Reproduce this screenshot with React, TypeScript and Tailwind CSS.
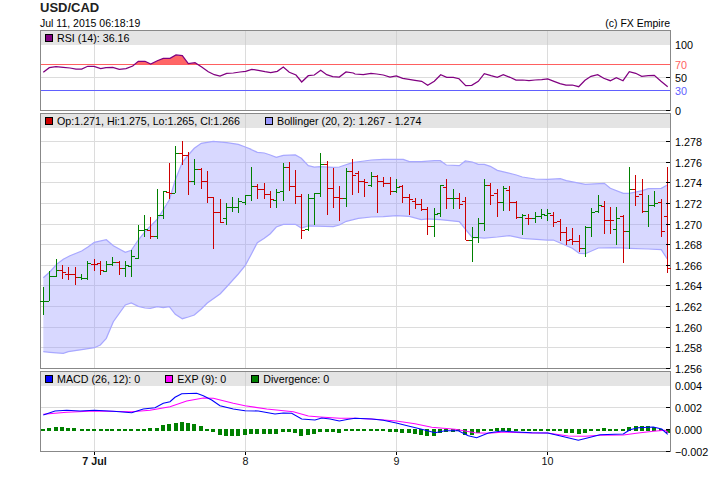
import type { ReactNode } from "react";

type Pt = [number, number];
// bar readings: x, high, low, open, close (3x crop coordinates)
type Bar = [number, number, number, number, number];

const VGRID = [94, 245, 396, 547];

const pts = (list: Pt[], ox: number, oy: number): Pt[] =>
  list.map(([x, y]) => [ox + x / 3, oy + y / 3]);
const line = (list: Pt[]) => list.map(([x, y]) => `${x.toFixed(1)},${y.toFixed(1)}`).join(" ");

const rsi: Pt[] = [
  ...pts([[130,217],[148,203],[168,200],[190,202],[210,204],[228,207],[245,207],[263,199],[282,199],[302,206],[318,203],[338,202],[358,208],[378,206],[398,198],[415,184],[435,184],[452,192],[472,182],[490,175],[510,175],[528,165],[547,167],[565,191],[585,188],[605,201],[625,215],[643,224],[660,228],[680,220],[700,219],[720,216],[737,214],[755,208],[775,211],[795,215],[812,218],[832,214],[850,201],[868,217],[888,225],[905,246],[925,227],[943,225],[962,211],[980,224],[998,230],[1018,231],[1038,216],[1060,219]], 0, 0),
  ...pts([[0,222],[25,224],[48,220],[65,222],[85,225],[105,231],[124,228],[143,235],[162,238],[180,241],[200,244],[218,256],[238,244],[257,224],[275,232],[295,232],[312,236],[332,257],[350,256],[370,244],[388,221],[408,227],[427,232],[445,224],[465,232],[483,240],[503,240],[522,242],[540,240],[560,239],[578,237],[597,244],[615,251],[633,255],[652,255],[671,260],[690,241],[708,229],[728,224],[746,235],[766,242],[784,233],[804,242],[823,215],[842,220],[860,229],[880,227],[898,226],[918,244],[938,260]], 355, 0),
];

const upper: Pt[] = [
  ...pts([[40,458],[60,440],[80,418],[100,403],[120,392],[155,378],[175,365],[193,352],[229,344],[250,362],[286,382],[304,376],[325,345],[345,320],[382,283],[418,225],[436,165],[457,112],[475,90],[493,70],[514,55],[550,49],[590,53],[625,58],[646,66],[664,73]], 30, 125),
  ...pts([[0,72],[22,82],[43,84],[61,90],[79,97],[100,91],[136,90],[154,100],[175,122],[193,126],[211,125],[250,127],[268,126],[307,113],[343,108],[364,105],[400,103],[439,103],[460,103],[478,110],[514,110],[553,107],[571,107],[589,120],[628,122],[646,108],[667,111]], 250, 125),
  ...pts([[-5,118],[13,118],[31,124],[52,136],[109,150],[127,156],[166,162],[202,163],[241,161],[259,167],[316,178],[373,175],[391,190],[430,205],[448,205],[487,197],[505,191],[544,190],[562,180]], 480, 125),
];

const lower: Pt[] = [
  ...pts([[40,680],[60,682],[100,685],[115,680],[155,674],[193,668],[211,660],[229,640],[250,590],[286,540],[304,534],[325,544],[345,549],[361,550],[382,545],[400,548],[418,545],[436,568],[457,581],[475,576],[493,570],[514,552],[532,534],[571,506],[589,487],[625,447],[646,421],[664,388]], 30, 125),
  ...pts([[22,353],[43,340],[61,326],[79,306],[100,298],[136,298],[154,309],[175,303],[250,305],[268,300],[289,289],[325,280],[364,276],[400,275],[439,272],[478,274],[514,284],[532,282],[571,284],[628,290],[646,312],[667,338]], 250, 125),
  ...pts([[-5,338],[13,339],[52,336],[88,332],[127,340],[202,345],[220,345],[277,370],[298,385],[316,386],[355,369],[409,368],[448,370],[505,372],[544,374],[562,402]], 480, 125),
];

const macd: Pt[] = [
  ...pts([[130,150],[165,138],[200,136],[240,138],[283,136],[340,139],[395,143],[430,132],[465,128],[490,115],[510,110],[525,97],[545,86],[590,85],[610,92],[635,105],[660,122],[700,132],[735,137],[775,138],[825,147],[850,144],[875,145],[905,162],[945,165],[965,159],[990,162],[1018,168],[1045,163]], 0, 365),
  ...pts([[0,160],[50,162],[85,166],[124,174],[160,183],[200,193],[240,203],[270,197],[310,197],[340,212],[365,218],[400,204],[440,198],[470,200],[530,203],[578,204],[620,214],[670,226],[700,218],[735,209],[780,208],[805,207],[825,194],[850,188],[895,186],[920,192],[938,208]], 355, 365),
];

const signal: Pt[] = [
  ...pts([[130,148],[200,142],[283,138],[395,140],[450,136],[510,125],[560,108],[610,99],[640,100],[700,115],[735,122],[800,132],[880,140],[925,153],[960,156],[1020,160]], 0, 365),
  ...pts([[0,160],[60,163],[124,168],[180,176],[230,187],[300,193],[360,203],[400,205],[450,201],[530,204],[578,204],[640,213],[690,214],[735,211],[805,210],[850,204],[895,199],[930,196],[940,203]], 355, 365),
];

const bars: [number, Bar[]][] = [
  [30, [[40,488,572,528,528],[58,440,530,528,455],[79,402,456,455,436],[97,420,462,436,442],[115,426,466,448,448],[136,428,482,448,457],[154,448,467,457,459],[172,408,467,461,415],[193,402,438,418,418],[211,408,450,414,436],[229,408,443,438,418],[247,396,425,418,411],[268,410,450,411,429],[286,408,456,429,421],[304,376,456,424,394],[325,302,404,401,316],[343,270,338,316,314],[361,276,344,316,334],[382,192,344,334,271],[400,200,282,271,200],[418,114,222,202,204],[436,64,206,204,86],[457,48,122,86,90],[475,82,210,90,170],[493,102,180,170,132],[514,130,192,132,170],[532,140,234,170,216],[550,216,374,216,262],[571,222,294,262,291],[589,236,300,281,246],[607,218,262,246,246],[625,220,264,246,230],[646,210,242,232,212],[664,128,230,212,184]]],
  [250, [[22,178,222,184,194],[43,174,222,194,208],[61,198,250,208,224],[79,192,250,226,202],[100,114,228,198,128],[118,112,200,128,184],[136,136,238,184,214],[154,208,344,214,316],[175,208,320,314,220],[193,204,302,220,204],[211,84,216,204,118],[232,108,270,118,190],[250,130,250,190,216],[268,184,288,216,220],[289,130,248,220,138],[307,102,212,138,152],[325,140,204,146,170],[343,162,216,170,172],[364,142,186,182,154],[382,150,266,154,170],[400,156,186,170,176],[421,156,210,176,200],[439,162,206,200,186],[457,180,234,184,216],[478,208,272,216,224],[496,220,254,230,238],[514,222,260,238,254],[532,246,332,254,304],[553,250,338,304,268],[571,180,278,266,182],[589,162,252,188,220],[610,192,252,220,220],[628,204,252,220,238],[646,218,346,230,346],[667,306,412,346,338],[685,280,356,338,296]]],
  [480, [[13,162,320,296,182],[31,174,240,182,212],[52,192,278,206,232],[70,184,258,232,190],[88,184,258,196,232],[109,228,282,232,278],[127,268,330,276,272],[145,268,300,281,281],[166,262,296,281,274],[184,252,282,274,268],[202,252,290,270,266],[220,262,306,272,292],[241,282,348,290,322],[259,308,362,322,346],[277,310,362,342,350],[298,332,382,350,370],[316,304,396,370,306],[334,250,336,306,262],[355,212,264,258,240],[373,228,328,244,286],[391,246,328,286,286],[409,248,362,314,280],[430,270,414,274,318],[448,128,372,318,192],[466,150,244,192,214],[487,162,266,208,258],[505,210,308,258,240],[523,198,248,240,234],[544,222,338,232,318],[562,128,444,274,430]]],
];

// bars read as red in the picture
const RED = new Set([
  "30:97","30:115","30:136","30:193","30:211","30:268","30:361","30:418","30:457","30:475","30:514","30:532","30:550","30:571",
  "250:22","250:43","250:61","250:118","250:136","250:154","250:232","250:250","250:268","250:307","250:325","250:343","250:382","250:400","250:421","250:457","250:478","250:496","250:514","250:532","250:589","250:628","250:646",
  "480:31","480:52","480:88","480:109","480:145","480:220","480:241","480:259","480:277","480:298","480:373","480:391","480:430","480:466","480:487","480:544","480:562",
]);

const histA: Pt[] = [[128,3],[147,5],[168,8],[185,8],[204,6],[223,5],[245,3],[263,3],[283,3],[303,2],[320,1],[337,1],[357,-2],[375,-3],[393,-3],[413,2],[433,4],[451,5],[471,7],[490,14],[508,17],[527,22],[546,25],[564,20],[583,18],[603,11],[621,3],[640,-6],[660,-15],[678,-18],[697,-18],[714,-18],[735,-15],[752,-13],[771,-13],[792,-12],[810,-12],[828,-12],[848,-6],[867,-6],[886,-10],[903,-18],[924,-14],[941,-12],[960,-6],[980,-6],[998,-6],[1017,-9],[1037,-4],[1055,-3]];
const histB: Pt[] = [[8,-3],[28,-3],[47,-3],[65,-3],[85,-3],[104,-5],[123,-5],[141,-9],[162,-10],[180,-12],[198,-14],[216,-18],[237,-18],[255,-8],[273,-6],[293,-6],[310,-4],[330,-14],[350,-14],[368,-10],[388,-2],[407,1],[425,5],[445,7],[463,7],[483,2],[503,1],[522,1],[540,-1],[558,-2],[578,-2],[597,-2],[615,-3],[633,-8],[652,-8],[671,-12],[690,-8],[708,2],[728,3],[746,6],[766,3],[784,3],[804,3],[823,10],[842,13],[860,13],[880,13],[898,9],[918,3],[938,-8]];

function Legend({ color, label }: { color: string; label: string }) {
  return (
    <div className="flex items-center gap-[4px]">
      <span className={`w-[8px] h-[8px] border border-black ${color}`} />
      <span>{label}</span>
    </div>
  );
}

function Panel({ h, legend, children }: { h: string; legend: ReactNode; children: ReactNode }) {
  return (
    <div className={`w-[631px] border border-[#888888] flex flex-col ${h}`}>
      <div className="relative h-[14px] bg-[#e4e4e4] flex items-center pl-[4px] shrink-0 leading-[14px]">
        <svg className="absolute left-0 top-0" width="629" height="14" viewBox="41 0 629 14" shapeRendering="crispEdges">
          {VGRID.map((x) => (
            <rect key={x} x={x} y={0} width={1} height={14} fill="#d2d2d2" />
          ))}
        </svg>
        <div className="relative flex items-center gap-[25px]">{legend}</div>
      </div>
      {children}
    </div>
  );
}

function Grid({ rows, top, bottom }: { rows: number[]; top: number; bottom: number }) {
  return (
    <g shapeRendering="crispEdges">
      {rows.map((y) => (
        <rect key={y} x={41} y={y} width={629} height={1} fill="#dcdcdc" />
      ))}
      {VGRID.map((x) => (
        <rect key={x} x={x} y={top} width={1} height={bottom - top} fill="#dcdcdc" />
      ))}
    </g>
  );
}

function Ticks({ rows }: { rows: number[] }) {
  return (
    <g shapeRendering="crispEdges">
      {rows.map((y) => (
        <rect key={y} x={666} y={y} width={4} height={1} fill="#000000" />
      ))}
    </g>
  );
}

function Axis({ vb, h, labels }: { vb: string; h: number; labels: [string, number, string?][] }) {
  return (
    <svg className="overflow-visible shrink-0" width="39" height={h} viewBox={vb}>
      {labels.map(([t, y, c]) => (
        <text key={t} x={675} y={y + 4.5} fontSize="10.8" fill={c ?? "#000000"}>
          {t}
        </text>
      ))}
    </svg>
  );
}

export default function App() {
  const mainRows = [141, 162, 182, 203, 224, 244, 265, 285, 306, 327, 347];
  const mainLabels = ["1.278", "1.276", "1.274", "1.272", "1.270", "1.268", "1.266", "1.264", "1.262", "1.260", "1.258"];

  return (
    <div className="w-[710px] h-[487px] bg-white pl-[40px] overflow-hidden text-[10.7px] text-black font-['Liberation_Sans',Arial,sans-serif]">
      <div className="h-[15px] text-[13px] leading-[15px] font-bold text-[#222222]">USD/CAD</div>
      <div className="h-[15px] w-[631px] flex justify-between leading-[16px] text-[10.5px]">
        <span>Jul 11, 2015 06:18:19</span>
        <span className="pr-[1px]">(c) FX Empire</span>
      </div>

      {/* RSI */}
      <div className="flex">
        <Panel h="h-[81px]" legend={<Legend color="bg-[#800080]" label="RSI (14): 36.16" />}>
          <svg className="overflow-visible block" width="629" height="65" viewBox="41 45 629 65">
            <defs>
              <clipPath id="over70">
                <rect x={41} y={45} width={629} height={19.5} />
              </clipPath>
            </defs>
            <Grid rows={[77]} top={45} bottom={110} />
            <polygon clipPath="url(#over70)" points={`43.3,64.5 ${line(rsi)} 668,64.5`} fill="#ff6666" />
            <g shapeRendering="crispEdges">
              <rect x={41} y={64} width={629} height={1} fill="#ff6060" />
              <rect x={41} y={90} width={629} height={1} fill="#6060ff" />
            </g>
            <polyline points={line(rsi)} fill="none" stroke="#800080" strokeWidth="1.25" />
            <Ticks rows={[44, 77, 110]} />
          </svg>
        </Panel>
        <Axis
          vb="671 30 39 81"
          h={81}
          labels={[["100", 44], ["70", 64, "#ff6060"], ["50", 77], ["30", 90, "#6060ff"], ["0", 110]]}
        />
      </div>

      {/* Price */}
      <div className="flex mt-[2px]">
        <Panel
          h="h-[256px]"
          legend={
            <>
              <Legend color="bg-[#cc0000]" label="Op:1.271, Hi:1.275, Lo:1.265, Cl:1.266" />
              <Legend color="bg-[#9999ff]" label="Bollinger (20, 2): 1.267 - 1.274" />
            </>
          }
        >
          <svg className="overflow-visible block" width="629" height="240" viewBox="41 128 629 240">
            <Grid rows={mainRows} top={128} bottom={368} />
            <polygon points={line([...upper, ...[...lower].reverse()])} fill="#9999ff" fillOpacity="0.38" />
            <polyline points={line(upper)} fill="none" stroke="#a8a8ff" strokeWidth="1.25" />
            <polyline points={line(lower)} fill="none" stroke="#a8a8ff" strokeWidth="1.25" />
            <g shapeRendering="crispEdges">
              {bars.map(([ox, list]) =>
                list.map(([z, hi, lo, op, cl]) => {
                  const x = Math.floor(ox + z / 3);
                  const c = RED.has(`${ox}:${z}`) ? "#cc0000" : "#008000";
                  const top = Math.floor(125 + hi / 3);
                  return (
                    <g key={`${ox}:${z}`} fill={c}>
                      <rect x={x} y={top} width={1} height={Math.floor(125 + lo / 3) - top} />
                      <rect x={x - 3} y={Math.floor(125 + op / 3)} width={3} height={1} />
                      <rect x={x + 1} y={Math.floor(125 + cl / 3)} width={3} height={1} />
                    </g>
                  );
                })
              )}
            </g>
            <Ticks rows={[...mainRows, 368]} />
          </svg>
        </Panel>
        <Axis
          vb="671 113 39 256"
          h={256}
          labels={[...mainRows.map((y, i): [string, number] => [mainLabels[i], y]), ["1.256", 368]]}
        />
      </div>

      {/* MACD */}
      <div className="flex mt-[2px]">
        <Panel
          h="h-[81px]"
          legend={
            <>
              <Legend color="bg-[#0000ff]" label="MACD (26, 12): 0" />
              <Legend color="bg-[#ff00ff]" label="EXP (9): 0" />
              <Legend color="bg-[#008000]" label="Divergence: 0" />
            </>
          }
        >
          <svg className="overflow-visible block" width="629" height="65" viewBox="41 386 629 65">
            <Grid rows={[407]} top={386} bottom={451} />
            <g shapeRendering="crispEdges" fill="#008000">
              {[...histA.map(([z, v]): Pt => [z / 3, v]), ...histB.map(([z, v]): Pt => [355 + z / 3, v])].map(([x, v]) => {
                const height = Math.max(2, Math.round(Math.abs(v) / 3) + 1);
                const y = v > 0 ? 431 - height : 429;
                return <rect key={x} x={Math.round(x) - 2} y={y} width={4} height={height} />;
              })}
            </g>
            <polyline points={line(signal)} fill="none" stroke="#ff00ff" strokeWidth="1.1" />
            <polyline points={line(macd)} fill="none" stroke="#0000ff" strokeWidth="1.1" />
            <Ticks rows={[385, 407, 429, 451]} />
          </svg>
        </Panel>
        <Axis
          vb="671 371 39 81"
          h={81}
          labels={[["0.004", 385], ["0.002", 407], ["0.000", 429], ["\u22120.002", 451]]}
        />
      </div>

      {/* Time axis */}
      <svg className="block" width="631" height="20" viewBox="40 452 631 20">
        <g shapeRendering="crispEdges">
          {VGRID.map((x) => (
            <rect key={x} x={x} y={452} width={1} height={3} fill="#000000" />
          ))}
        </g>
        <text x={94.5} y={465} fontSize="10.7" fontWeight="700" textAnchor="middle" fill="#111111">
          7 Jul
        </text>
        <text x={245.5} y={465} fontSize="10.7" textAnchor="middle" fill="#111111">
          8
        </text>
        <text x={396.5} y={465} fontSize="10.7" textAnchor="middle" fill="#111111">
          9
        </text>
        <text x={547.5} y={465} fontSize="10.7" textAnchor="middle" fill="#111111">
          10
        </text>
      </svg>
    </div>
  );
}
